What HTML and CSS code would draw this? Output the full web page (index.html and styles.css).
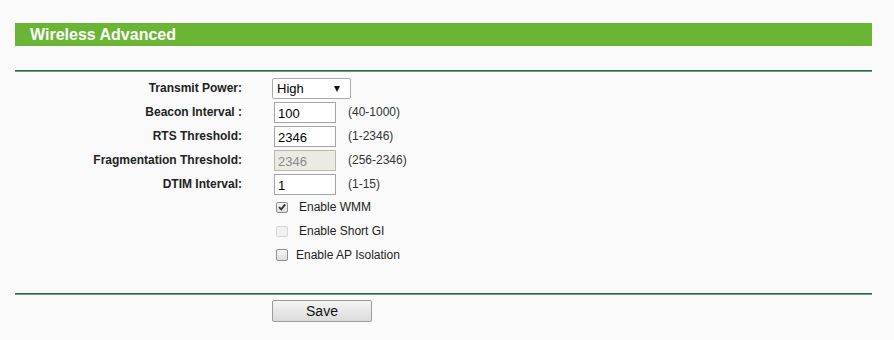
FILE: index.html
```html
<!DOCTYPE html>
<html>
<head>
    <meta charset="UTF-8">
    <title>Wireless Advanced</title>
    <link rel="stylesheet" href="styles.css">
</head>
<body>
    <div class="page">
        <div class="title">Wireless Advanced</div>
        <div class="rule"></div>

        <div class="form">
            <div class="row">
                <label class="lbl">Transmit Power:</label>
                <div class="ctl">
                    <span class="select">
                        <select>
                            <option>High</option>
                            <option>Middle</option>
                            <option>Low</option>
                        </select>
                    </span>
                </div>
            </div>
            <div class="row">
                <label class="lbl">Beacon Interval :</label>
                <div class="ctl">
                    <input class="txt" type="text" value="100">
                    <span class="hint">(40-1000)</span>
                </div>
            </div>
            <div class="row">
                <label class="lbl">RTS Threshold:</label>
                <div class="ctl">
                    <input class="txt" type="text" value="2346">
                    <span class="hint">(1-2346)</span>
                </div>
            </div>
            <div class="row">
                <label class="lbl">Fragmentation Threshold:</label>
                <div class="ctl">
                    <input class="txt" type="text" value="2346" disabled>
                    <span class="hint">(256-2346)</span>
                </div>
            </div>
            <div class="row">
                <label class="lbl">DTIM Interval:</label>
                <div class="ctl">
                    <input class="txt" type="text" value="1">
                    <span class="hint">(1-15)</span>
                </div>
            </div>

            <div class="checks">
                <label class="check">
                    <input type="checkbox" checked>
                    <span class="box">
                        <svg width="10" height="10" viewBox="0 0 10 10"><path d="M2 5.2 L4.2 7.4 L8.2 2.4" fill="none" stroke="#333" stroke-width="1.8"/></svg>
                    </span>
                    Enable WMM
                </label>
                <label class="check off">
                    <input type="checkbox" disabled>
                    <span class="box"></span>
                    Enable Short GI
                </label>
                <label class="check tight">
                    <input type="checkbox">
                    <span class="box"></span>
                    Enable AP Isolation
                </label>
            </div>
        </div>

        <div class="rule bottom"></div>
        <div class="actions">
            <button class="btn">Save</button>
        </div>
    </div>
</body>
</html>
```

FILE: styles.css
```css
*{margin: 0;padding: 0;box-sizing: border-box;}
body{
    background: #fafafa;
    font-family: "Liberation Sans", Arial, sans-serif;
    color: #222;
}
.page{
    width: 872px;
    padding: 23px 0 0 15px;
}
.title{
    height: 23px;
    line-height: 23px;
    background: #6ab634;
    color: #fff;
    font-size: 16px;
    font-weight: bold;
    padding-left: 15px;
}
.rule{
    margin-top: 24px;
    height: 2px;
    border-top: 1px solid #226b45;
    border-bottom: 1px solid #6b9e84;
}
.form{
    padding-top: 4px;
}
.row{
    display: flex;
    align-items: center;
    height: 24px;
}
.lbl{
    width: 257px;
    padding-right: 30px;
    text-align: right;
    font-size: 12px;
    font-weight: bold;
    white-space: nowrap;
}
.ctl{
    display: flex;
    align-items: center;
}
.select{
    position: relative;
    display: block;
    width: 79px;
    height: 21px;
}
.select select{
    appearance: none;
    -webkit-appearance: none;
    width: 79px;
    height: 21px;
    border: 1px solid #a9a9a9;
    border-radius: 2px;
    background: #fff;
    font-family: inherit;
    font-size: 13px;
    color: #000;
    padding-left: 4px;
    outline: none;
}
.select:after{
    content: "";
    position: absolute;
    right: 11px;
    top: 8px;
    border-left: 3.5px solid transparent;
    border-right: 3.5px solid transparent;
    border-top: 6px solid #111;
    pointer-events: none;
}
.txt{
    width: 62px;
    height: 21px;
    margin-left: 2px;
    border: 1px solid #a5a5a5;
    background: #fff;
    font-family: inherit;
    font-size: 13px;
    color: #000;
    padding: 3px 0 0 3px;
    outline: none;
}
.txt:disabled{
    background: #ebebe4;
    border-color: #b8b8b0;
    color: #8a8a8a;
}
.hint{
    margin-left: 12px;
    font-size: 12px;
    color: #333;
}
.checks{
    margin-top: -1px;
    padding-left: 261px;
}
.check{
    display: flex;
    align-items: center;
    height: 24px;
    font-size: 12px;
    color: #222;
}
.check input{
    display: none;
}
.box{
    width: 12px;
    height: 11px;
    margin-right: 11px;
    border: 1px solid #8e8f8f;
    border-radius: 2px;
    background: linear-gradient(#f6f6f6, #dedede);
    display: flex;
    align-items: center;
    justify-content: center;
}
.check.off .box{
    border-color: #d6d6d6;
    background: #f1f1f1;
}
.check.tight .box{
    height: 12px;
    margin-right: 8px;
}
.actions{
    padding: 5px 0 0 257px;
}
.btn{
    width: 100px;
    height: 22px;
    border: 1px solid #9b9b9b;
    border-radius: 2px;
    background: linear-gradient(#f4f4f4, #dcdcdc);
    font-family: inherit;
    font-size: 14px;
    color: #111;
}
.bottom{
    margin-top: 26px;
}
```
